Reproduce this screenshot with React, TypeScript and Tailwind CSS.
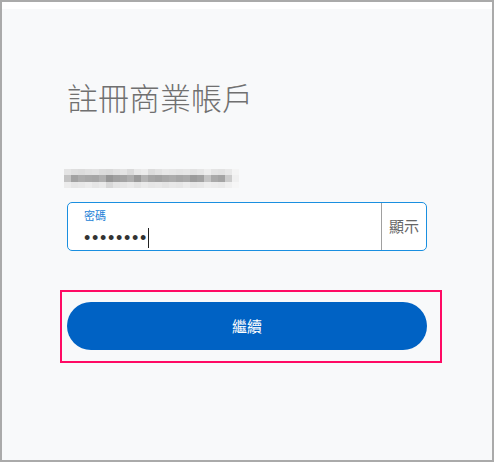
const CJK = "font-['Noto_Sans_CJK_TC','Noto_Sans',sans-serif]";

// pixelated (redacted) email address, 3 rows of mosaic tiles
const MOSAIC: string[][] = [
  ["#e4e4e4", "#dedede", "#dcdcdc", "#e0e0e0", "#e2e2e2", "#dcdcdc", "#dadada", "#e0e0e0", "#e4e4e4", "#dadada", "#e8e8e8", "#ececec", "#dcdcdc", "#e2e2e2", "#e8e8e8", "#e6e6e6", "#e4e4e4", "#e6e6e6", "#e2e2e2", "#e6e6e6", "#eeeeee", "#e4e4e4", "#e2e2e2", "#e8e8e8", "#f4f4f4"],
  ["#c4c4c4", "#a2a2a2", "#acacac", "#a8a8a8", "#a6a6a6", "#b0b0b0", "#969696", "#a0a0a0", "#a4a4a4", "#aeaeae", "#9a9a9a", "#b4b4b4", "#a6a6a6", "#a2a2a2", "#a8a8a8", "#acacac", "#a6a6a6", "#aaaaaa", "#9c9c9c", "#a2a2a2", "#c4c4c4", "#aaaaaa", "#a4a4a4", "#cccccc", "#f0f0f0"],
  ["#ececec", "#e6e6e6", "#e8e8e8", "#ececec", "#e6e6e6", "#eaeaea", "#d8d8d8", "#e4e4e4", "#e6e6e6", "#eaeaea", "#e4e4e4", "#eaeaea", "#e6e6e6", "#e8e8e8", "#e4e4e4", "#e8e8e8", "#e6e6e6", "#ececec", "#e6e6e6", "#e8e8e8", "#eeeeee", "#ececec", "#eaeaea", "#f0f0f0", "#f6f6f6"],
];

export default function App() {
  return (
    <div className={`flex h-[462px] w-[494px] flex-col border-2 border-[#aaaaaa] bg-[#f8f9fa] ${CJK}`}>
      <div className="h-[7px] bg-white" />
      <div className="flex flex-col px-[65px]">
        <h1 className="mt-[73px] text-[31px] font-light leading-[30px] text-[#707070]">註冊商業帳戶</h1>

        <div className="mt-[57px] ml-[-3px] flex flex-col" aria-label="email">
          {MOSAIC.map((row, r) => (
            <div key={r} className={`flex ${r === 1 ? "h-[7px]" : "h-[6px]"}`}>
              {row.map((c, i) => (
                <span key={i} className="h-full w-[7px]" style={{ backgroundColor: c }} />
              ))}
            </div>
          ))}
        </div>

        <div className="mt-[14px] flex h-[49px] w-[360px] rounded-[5px] border border-[#1a8fe0] bg-white">
          <div className="relative flex flex-1 flex-col pl-[16px]">
            <span className="mt-[5px] text-[11px] leading-[14px] text-[#1a7fd6]">密碼</span>
            <div className="mt-[6px] flex items-center">
              <span className="font-['Liberation_Sans',sans-serif] text-[18px] leading-[20px] tracking-[1.7px] text-[#333]">••••••••</span>
              <span className="h-[20px] w-px bg-[#222]" />
            </div>
          </div>
          <div className="w-px bg-[#a0a0a0]" />
          <button className="w-[44px] text-[15px] text-[#666]">顯示</button>
        </div>

        <div className="relative mt-[51px] w-[360px]">
          <button className="h-[48px] w-full rounded-full bg-[#0062c4] text-[15px] font-normal text-white">繼續</button>
          <div className="pointer-events-none absolute -top-[12px] -bottom-[13px] -left-[7px] -right-[15px] border-2 border-[#ff0a64]" />
        </div>
      </div>
    </div>
  );
}
